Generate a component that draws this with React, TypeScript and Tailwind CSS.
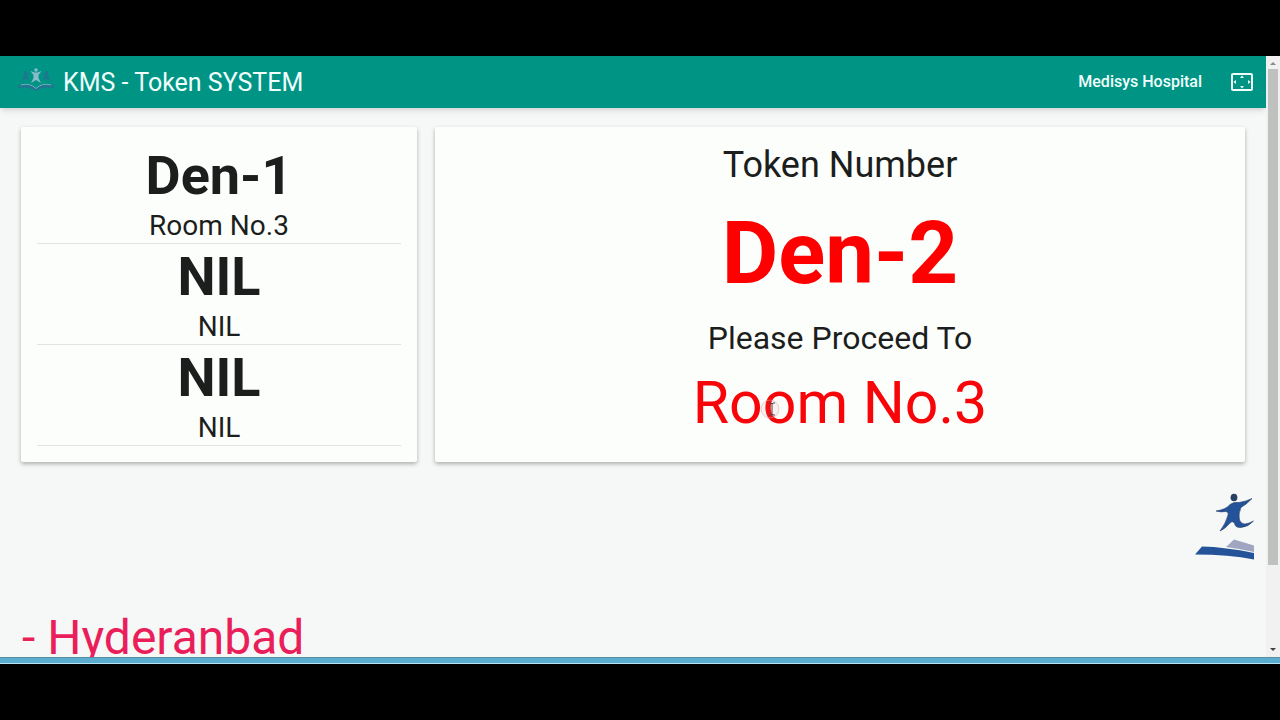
import { MdSettingsOverscan } from "react-icons/md"

const tokens = [
  { token: "Den-1", room: "Room No.3" },
  { token: "NIL", room: "NIL" },
  { token: "NIL", room: "NIL" },
]

const Logo = () => {
  return (
    <svg viewBox="0 0 38 28" className="w-[38px] h-7" aria-hidden="true">
      <g fill="#23748f">
        <path d="M0 18 Q10 13 19 20 Q28 13 38 18 L36 20 Q26 18 19 23 Q12 18 2 20 Z" />
        <circle cx="8.500" cy="4.500" r="1.500" />
        <path d="M5 7 L8.500 6.500 L12 5 L10 8.500 L12 12.500 L8.500 10.500 L5 13 L7 8.500 Z" />
        <circle cx="29.500" cy="4.500" r="1.500" />
        <path d="M33 7 L29.500 6.500 L26 5 L28 8.500 L26 12.500 L29.500 10.500 L33 13 L31 8.500 Z" />
      </g>
      <path
        d="M4 17 Q13 14.500 19 20.500 Q25 14.500 34 17"
        fill="none"
        stroke="#6fb0bf"
        strokeWidth="1"
      />
      <g fill="#86bccb">
        <circle cx="19" cy="2" r="1.800" />
        <path d="M13.500 3 L17.500 4.500 H20.500 L24.500 3 L21.500 7 L21.500 10 L24 15 L19 12 L14 15 L16.500 10 L16.500 7 Z" />
      </g>
    </svg>
  )
}

const Runner = () => {
  return (
    <svg viewBox="-1 0 60 70" className="w-[60px] h-[70px]" aria-hidden="true">
      <ellipse cx="39" cy="5.500" rx="3.400" ry="3.800" fill="#263f63" />
      <path
        fill="#24539a"
        stroke="#2b4066"
        strokeWidth="0.600"
        d="M21 19 Q31 17.500 35 12.500 Q39 9.500 44 10.500 Q51 9.500 57 6.500 Q52 12 46 15.500 Q43 22 44.500 28 Q46 32 50 32 Q54 31.500 58.500 29 Q53 35 46 35.500 Q40 36 39.500 31 Q37 28.500 35 31 Q30 37 25 39 Q31 31 33 23 Q34 20 31 19.500 Q26 20.500 21 19 Z"
      />
      <path fill="#24539a" d="M0 62.500 L7 54.500 Q30 55 59 61 V67.500 Q34 62.500 0 62.500 Z" />
      <path fill="#a0a5c2" d="M31 55 L39 47.500 L59 53.500 V60 Q46 57 31 55 Z" />
    </svg>
  )
}

const Header = () => {
  return (
    <header className="relative h-[52px] shrink-0 pl-[17px] pr-3 flex items-center justify-between bg-[#009485] text-[#f0fffc] shadow-md">
      <div className="flex items-center gap-2">
        <Logo />
        <h1 className="text-[25px] leading-[33px]">KMS - Token SYSTEM</h1>
      </div>
      <div className="flex items-center gap-7">
        <span className="text-base font-medium">Medisys Hospital</span>
        <button type="button" aria-label="Full screen">
          <MdSettingsOverscan className="w-6 h-6" />
        </button>
      </div>
    </header>
  )
}

const Scrollbar = () => {
  return (
    <div className="w-[14px] shrink-0 flex flex-col items-center bg-[#f0f1f0]" aria-hidden="true">
      <svg viewBox="0 0 14 13" className="w-[14px] h-[13px]">
        <path d="M4 9 L7 6 L10 9 Z" fill="#8a8a8a" />
      </svg>
      <div className="w-[10px] grow-[13] bg-[#bfc1bf]" />
      <div className="grow-[2]" />
      <svg viewBox="0 0 14 16" className="w-[14px] h-4">
        <path d="M4 7 L7 10 L10 7 Z" fill="#404040" />
      </svg>
    </div>
  )
}

const App = () => {
  return (
    <div className="h-screen py-14 flex flex-col bg-black text-[#1c1e1d] font-[Roboto,sans-serif]">
      <div className="flex-1 min-h-0 flex bg-[#f6f8f7]">
        <div className="flex-1 min-w-0 flex flex-col overflow-hidden">
          <Header />

          <main className="pt-[19px] px-[21px] grid grid-cols-3 gap-[18px] text-center">
            <section className="p-4 bg-[#fcfefc] rounded-xs shadow-[0_2px_4px_rgba(0,0,0,0.3)]">
              {tokens.map((item, i) => (
                <div key={i} className="border-b border-[#e2e4e3]">
                  <h2 className="text-[54px] leading-[66px] font-bold">{item.token}</h2>
                  <p className="text-[28px] leading-[34px]">{item.room}</p>
                </div>
              ))}
            </section>

            <section className="col-span-2 px-4 pt-4 pb-3 bg-[#fcfefc] rounded-xs shadow-[0_2px_4px_rgba(0,0,0,0.3)]">
              <p className="text-[36px] leading-[44px]">Token Number</p>
              <p className="text-[87px] leading-[132px] font-bold text-[#ff0000]">Den-2</p>
              <p className="text-[32px] leading-[38px]">Please Proceed To</p>
              <p className="relative text-[59px] leading-[92px] text-[#f80509]">
                Room No.3
                {/* mouse pointer */}
                <svg
                  viewBox="0 0 20 20"
                  className="absolute top-[42px] left-1/2 -ml-20 w-5 h-5"
                  aria-hidden="true"
                >
                  <circle cx="10" cy="10" r="9" fill="#d08080" fillOpacity="0.1" stroke="#d9a0a0" strokeOpacity="0.500" />
                  <path d="M9 4 H11 L12 5 L13 4 H15 M12 5 V15 M9 16 H11 L12 15 L13 16 H15" fill="none" stroke="#444" />
                </svg>
              </p>
            </section>
          </main>

          <div className="mt-[30px] pr-3 flex justify-end">
            <Runner />
          </div>
          <p className="mt-11 px-[22px] text-[48px] leading-[64px] text-[#e91e5a] whitespace-nowrap">
            - Hyderanbad
          </p>
        </div>
        <Scrollbar />
      </div>
      <div className="h-[7px] shrink-0 bg-[#5badd0] border-t border-b border-t-[#5b8ea3] border-b-[#b5e3f3]" />
    </div>
  )
}

export default App
